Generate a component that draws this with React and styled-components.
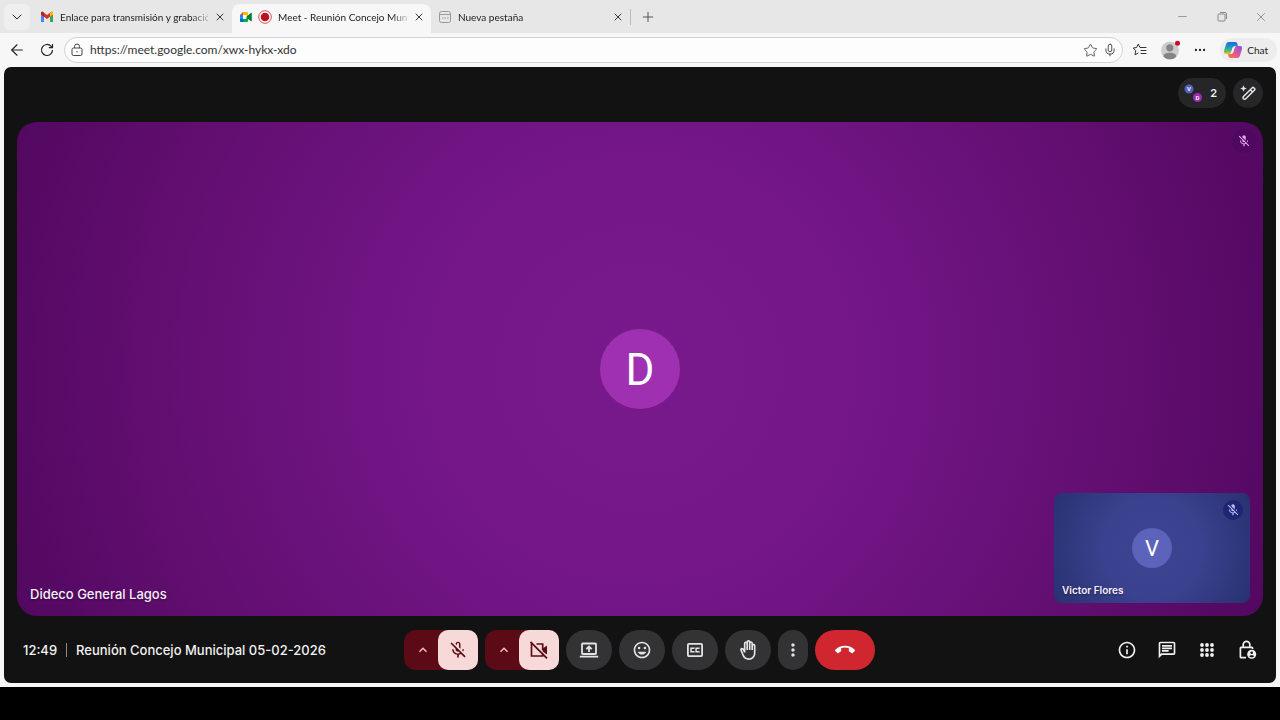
import React from "react";
import styled, { createGlobalStyle } from "styled-components";
import { ChevronDown, X, Plus, Minus, ArrowLeft, Star, Mic, Ellipsis } from "lucide-react";
import {
  MdOutlineMicOff,
  MdMicOff,
  MdOutlineMood,
  MdOutlineBackHand,
  MdMoreVert,
  MdCallEnd,
  MdKeyboardArrowUp,
  MdOutlineInfo,
  MdOutlineChat,
} from "react-icons/md";

const uiFont = `Lato, "Open Sans", sans-serif`;
const meetFont = `Inter, "Liberation Sans", sans-serif`;

const GlobalStyle = createGlobalStyle`
  *, *::before, *::after { box-sizing: border-box; }
  body { margin: 0; background: #000; }
  button, input { font: inherit; color: inherit; border: 0; padding: 0; background: none; }
  svg { display: block; flex: none; }
`;

const Page = styled.div`
  min-height: 100vh;
  display: flex;
  flex-direction: column;
  padding-bottom: 33px;
  background: #000;
`;

const Browser = styled.div`
  flex: 1;
  display: flex;
  flex-direction: column;
  background: #f7f7f7;
  font-family: ${uiFont};
  color: #222;
`;

const TabStrip = styled.header`
  display: flex;
  align-items: stretch;
  height: 33px;
  padding: 4px 0 0 4px;
  background: #e7e7e7;
`;

const TabMenuButton = styled.button`
  display: grid;
  place-items: center;
  width: 26px;
  height: 26px;
  border-radius: 6px;
  background: #efefef;
`;

const TabList = styled.nav`
  display: flex;
  margin-left: 3px;
`;

const Tab = styled.div`
  display: flex;
  align-items: center;
  gap: 6px;
  width: 199px;
  padding: 0 6px 3px 7px;
  border-radius: 8px 8px 0 0;
  background: ${(p) => (p.$active ? "#f7f7f7" : "transparent")};
`;

const TabTitle = styled.a`
  flex: 1;
  min-width: 0;
  white-space: nowrap;
  font-size: 10px;
  line-height: 16px;
  color: #222;
  text-decoration: none;
  mask-image: linear-gradient(to right, #000 88%, rgba(0, 0, 0, 0.2));
`;

const TabClose = styled.button`
  display: grid;
  place-items: center;
  width: 12px;
  height: 14px;
`;

const NewTab = styled.div`
  display: flex;
  align-items: center;
  gap: 9px;
  height: 26px;

  &::before {
    content: "";
    width: 1px;
    height: 16px;
    background: #bbb;
  }
`;

const PlainButton = styled.button`
  display: grid;
  place-items: center;
  width: ${(p) => p.$w || 20}px;
  height: ${(p) => p.$h || 20}px;
`;

const WindowControls = styled.div`
  display: flex;
  height: 25px;
  margin-left: auto;
  color: #888;
`;

const Toolbar = styled.div`
  display: flex;
  align-items: center;
  gap: 7px;
  height: 34px;
  padding: 0 3px 0 7px;
`;

const NavButtons = styled.div`
  display: flex;
  gap: 10px;
`;

const AddressBar = styled.label`
  flex: 1;
  display: flex;
  align-items: center;
  height: 26px;
  padding: 0 2px 0 5px;
  border: 1px solid #d2d2d2;
  border-radius: 13px;
  background: #fdfdfd;
`;

const AddressInput = styled.input`
  flex: 1;
  min-width: 0;
  margin-left: 6px;
  outline: 0;
  font-size: 12px;
  line-height: 16px;
  color: #333;
`;

const ToolbarActions = styled.div`
  display: flex;
  align-items: center;
  gap: 10px;
`;

const ChatButton = styled.button`
  display: flex;
  align-items: center;
  gap: 4px;
  height: 24px;
  padding: 0 9px 0 3px;
  border-radius: 12px;
  background: #ededed;
  font-size: 10px;
  color: #222;
`;

const Meeting = styled.main`
  flex: 1;
  display: flex;
  flex-direction: column;
  margin: 0 4px 4px;
  border-radius: 7px;
  background: #121212;
  font-family: ${meetFont};
  color: #f1f1f1;
`;

const MeetingTop = styled.div`
  display: flex;
  justify-content: flex-end;
  align-items: center;
  gap: 7px;
  height: 55px;
  padding: 0 13px 4px;
`;

const PeopleButton = styled.button`
  display: flex;
  align-items: center;
  justify-content: space-between;
  width: 48px;
  height: 30px;
  padding: 0 9px 0 6px;
  border-radius: 15px;
  background: #262628;
  font-size: 11px;
  font-weight: 600;
`;

const EffectsButton = styled.button`
  display: grid;
  place-items: center;
  width: 30px;
  height: 30px;
  border-radius: 50%;
  background: #262628;
`;

const Stage = styled.section`
  position: relative;
  flex: 1;
  display: grid;
  place-items: center;
  min-height: 280px;
  margin: 0 13px;
  border-radius: 20px;
  background: radial-gradient(circle farthest-corner, #791a8b 0%, #731687 35%, #5f0d6d 78%, #520860 100%);
`;

const Avatar = styled.div`
  display: grid;
  place-items: center;
  width: ${(p) => p.$size}px;
  height: ${(p) => p.$size}px;
  padding-top: 2px;
  border-radius: 50%;
  background: ${(p) => p.$color};
  font-family: Roboto, sans-serif;
  font-size: ${(p) => p.$font}px;
  line-height: 1;
  color: #fff;
`;

const ParticipantName = styled.span`
  position: absolute;
  left: ${(p) => (p.$small ? 8 : 13)}px;
  bottom: ${(p) => (p.$small ? 5 : 12)}px;
  font-size: ${(p) => (p.$small ? 10 : 13)}px;
  line-height: ${(p) => (p.$small ? 16 : 20)}px;
  font-weight: ${(p) => (p.$small ? 600 : 500)};
  color: #f8effa;
  text-shadow: 0 1px 2px rgba(0, 0, 0, 0.4);
`;

const MutedBadge = styled.span`
  position: absolute;
  top: 7px;
  right: 7px;
  display: grid;
  place-items: center;
  width: ${(p) => p.$size}px;
  height: ${(p) => p.$size}px;
  border-radius: 50%;
  background: ${(p) => p.$bg};
  color: ${(p) => p.$fg};
`;

const SelfTile = styled.div`
  position: absolute;
  right: 13px;
  bottom: 13px;
  display: grid;
  place-items: center;
  width: 196px;
  height: 110px;
  border-radius: 8px;
  background: radial-gradient(circle farthest-corner, #3d4594 0%, #3a418e 45%, #28316f 100%);
`;

const MeetingBar = styled.footer`
  display: grid;
  grid-template-columns: 1fr auto 1fr;
  align-items: center;
  height: 67px;
  padding: 0 9px 0 19px;
`;

const MeetingInfo = styled.div`
  display: flex;
  align-items: center;
  font-size: 13px;
  line-height: 20px;
  font-weight: 500;
  white-space: nowrap;
`;

const Divider = styled.span`
  width: 1px;
  height: 14px;
  margin: 0 9px;
  background: #8a8a8a;
`;

const Controls = styled.div`
  display: flex;
  gap: 7px;
  margin-right: 11px;
`;

const DeviceGroup = styled.div`
  display: flex;
  width: 74px;
  height: 40px;
  border-radius: 12px;
  background: #5c0a15;
  color: #f4c4c4;
`;

const DeviceMenu = styled.button`
  display: grid;
  place-items: center;
  width: 34px;
  height: 40px;
  padding-left: 4px;
`;

const DeviceToggle = styled.button`
  display: grid;
  place-items: center;
  width: 40px;
  height: 40px;
  border-radius: 10px;
  background: #f7d9da;
  color: #5b0d14;
`;

const ControlButton = styled.button`
  display: grid;
  place-items: center;
  width: ${(p) => p.$w || 46}px;
  height: 40px;
  border-radius: 20px;
  background: ${(p) => (p.$danger ? "#cf2630" : "#333336")};
  color: ${(p) => (p.$danger ? "#fff" : "#e3e3e3")};
`;

const SideControls = styled.div`
  display: flex;
  justify-content: flex-end;
`;

const GmailIcon = () => (
  <svg width="14" height="12" viewBox="0 0 14 12">
    <path d="M1 11V2.5l3 2.3V11z" fill="#4285f4" />
    <path d="M10 11V4.8l3-2.3V11z" fill="#34a853" />
    <path d="M1 3.5V2c0-1 1.200-1.500 2-.9l4 3 4-3c.8-.6 2-.1 2 .9v1.500L7 8z" fill="#d93025" />
    <path d="M10 5.700V2l1-.9c.8-.6 2-.1 2 .9v1.500z" fill="#fbbc04" />
    <path d="M1 3.500V2c0-1 1.200-1.500 2-.9l1 .8v3.800z" fill="#b3261e" />
  </svg>
);

const MeetIcon = () => (
  <svg width="13" height="12" viewBox="0 0 13 12">
    <path d="M1 4l3-3v3z" fill="#ea4335" />
    <path d="M1 4h3v4H1z" fill="#2684fc" />
    <path d="M1 8h3v3H2a1 1 0 0 1-1-1z" fill="#0066da" />
    <path d="M4 8h5v2a1 1 0 0 1-1 1H4z" fill="#00ac47" />
    <path d="M4 1h4a1 1 0 0 1 1 1v4L7 7V4H4z" fill="#ffba00" />
    <path d="M7 6l5-4.200c.4-.3.8 0 .8.400v7.600c0 .4-.4.700-.8.400L9 8H7z" fill="#00832d" />
    <path d="M4 4h3.500v4H4z" fill="#fff" />
  </svg>
);

const RecordingIcon = () => (
  <svg width="14" height="14" viewBox="0 0 14 14">
    <circle cx="7" cy="7" r="6.300" fill="#fff" stroke="#c4262e" strokeWidth="0.800" />
    <circle cx="7" cy="7" r="4.300" fill="#b8141f" />
  </svg>
);

const NewTabIcon = () => (
  <svg width="14" height="14" viewBox="0 0 14 14" fill="none" stroke="#999">
    <rect x="1.500" y="1.500" width="11" height="11" rx="2" />
    <path d="M1.500 4.500h11M4 8h1.500M6.500 8H8M9 8h1.500" />
  </svg>
);

const ReloadIcon = () => (
  <svg width="14" height="14" viewBox="0 0 14 14" fill="none" stroke="#222" strokeWidth="1.200">
    <path d="M12.500 7A5.500 5.500 0 1 1 11 3.200L12.500 4.700M12.500 1v3.700H8.800" />
  </svg>
);

const SiteLockIcon = () => (
  <svg width="14" height="14" viewBox="0 0 14 14" fill="none" stroke="#444">
    <rect x="2" y="5" width="10" height="7.500" rx="1.500" />
    <path d="M4.500 5V3.500a2.500 2.500 0 0 1 5 0V5" />
    <circle cx="7" cy="8.700" r="0.700" fill="#444" stroke="none" />
  </svg>
);

const FavoritesIcon = () => (
  <svg width="16" height="16" viewBox="0 0 16 16" fill="none" stroke="#333" strokeLinejoin="round" strokeLinecap="round">
    <path d="M9.500 5.500H8L6.300 2 4.600 5.500 1.200 6l2.500 2.500L3 12.800l3-1.700M9.500 5.500H14M9 8.500h5M9 11.500h5" />
  </svg>
);

const ProfileIcon = () => (
  <svg width="20" height="20" viewBox="0 0 20 20">
    <circle cx="10" cy="10.500" r="9" fill="#cdcdcd" />
    <circle cx="9.800" cy="7.800" r="3.600" fill="#858585" />
    <path d="M3.500 16.700c0-3 2.500-4 6.300-4s6.500 1 6.500 4a9 9 0 0 1-12.800 0z" fill="#858585" />
    <circle cx="17.500" cy="3.300" r="2.500" fill="#c50f1f" />
  </svg>
);

const RestoreIcon = () => (
  <svg width="10" height="10" viewBox="0 0 10 10" fill="none" stroke="#888">
    <rect x="1" y="2" width="7" height="7" rx="1" />
    <path d="M3 .5h5a1.500 1.500 0 0 1 1.500 1.500v5" />
  </svg>
);

const CopilotIcon = () => (
  <svg width="20" height="18" viewBox="0 0 20 18">
    <defs>
      <linearGradient id="cool" x1="0" y1="0" x2="0" y2="1">
        <stop offset="0" stopColor="#2866d8" />
        <stop offset="0.500" stopColor="#16a5c4" />
        <stop offset="0.800" stopColor="#79bd4f" />
        <stop offset="1" stopColor="#f3c02e" />
      </linearGradient>
      <linearGradient id="warm" x1="1" y1="0" x2="0" y2="1">
        <stop offset="0" stopColor="#8c50e8" />
        <stop offset="0.500" stopColor="#e0569b" />
        <stop offset="1" stopColor="#fb7b32" />
      </linearGradient>
    </defs>
    <path d="M6 1h6.500c1.200 0 1.700 1 2.100 2.300L15 5h-2.500c-1.600 0-2.400.8-2.900 2.300L8.300 11c-.5 1.500-1.200 2-2.800 2H3C1 13 .6 11.500 1.100 9.500L3 3.500C3.500 1.800 4.300 1 6 1z" fill="url(#cool)" />
    <path d="M14 17H7.500c-1.200 0-1.700-1-2.100-2.300L5 13h2.500c1.600 0 2.400-.8 2.900-2.300L11.700 7c.5-1.500 1.200-2 2.800-2H17c2 0 2.400 1.500 1.900 3.500L17 14.500c-.5 1.700-1.300 2.500-3 2.500z" fill="url(#warm)" />
    <path d="M9.600 6.500h1.800l-1.300 4.600c-.2.700-.5 1-1.100 1H8z" fill="#f4f4f8" />
  </svg>
);

const PeopleIcon = () => (
  <svg width="20" height="20" viewBox="0 0 20 20" fontFamily="Roboto, sans-serif" fontSize="6" fill="#fff" textAnchor="middle">
    <circle cx="5" cy="6" r="4.500" fill="#5360ba" />
    <text x="5" y="8">V</text>
    <circle cx="13.500" cy="14.500" r="4.500" fill="#9c2bb0" />
    <text x="13.500" y="17">D</text>
  </svg>
);

const EffectsIcon = () => (
  <svg width="18" height="18" viewBox="0 0 18 18" fill="none" stroke="#e3e3e3" strokeWidth="1.500" strokeLinejoin="round">
    <path d="M4.500 12.500l8.800-8.800a1 1 0 0 1 1.400 0l.9.900a1 1 0 0 1 0 1.400L6.800 14.800a1.600 1.600 0 0 1-2.300-2.300zM11.300 5.700l2.300 2.300" />
    <path d="M4.500 1.200l.9 2.400 2.400.9-2.400.9-.9 2.400-.9-2.400-2.400-.9 2.400-.9z" fill="#e3e3e3" stroke="none" />
  </svg>
);

const CameraOffIcon = () => (
  <svg width="20" height="20" viewBox="0 0 20 20" fill="none" stroke="currentColor" strokeWidth="1.700">
    <path d="M7.500 4H13.700V10.300M13.700 13.500V16H2.500V4H3.800" />
    <path d="M13.700 8.600L18 5.500v9l-4.300-3.100z" fill="currentColor" stroke="none" />
    <path d="M1.500 1.800l16.500 16.500" />
  </svg>
);

const PresentIcon = () => (
  <svg width="20" height="20" viewBox="0 0 20 20" fill="none" stroke="currentColor" strokeWidth="1.800">
    <rect x="3" y="3.500" width="14" height="10.500" rx="0.800" />
    <path d="M.8 16.700h18.400M10 12V6.800M7.300 9.200L10 6.500l2.700 2.700" />
  </svg>
);

const CaptionsIcon = () => (
  <svg width="20" height="20" viewBox="0 0 20 20" fill="none" stroke="currentColor" strokeWidth="1.800">
    <rect x="2.900" y="3.900" width="14.200" height="12.200" rx="1" />
    <path d="M8.900 8.800V8.200H6v3.600h2.900v-.6M14 8.800V8.200h-2.900v3.600H14v-.6" strokeWidth="1.500" />
  </svg>
);

const AppsIcon = () => (
  <svg width="20" height="20" viewBox="0 0 20 20" fill="currentColor">
    {[5, 10, 15].map((y) =>
      [5, 10, 15].map((x) => <circle key={`${x}-${y}`} cx={x} cy={y} r="1.900" />)
    )}
  </svg>
);

const HostLockIcon = () => (
  <svg width="20" height="20" viewBox="0 0 20 20" fill="none" stroke="currentColor" strokeWidth="1.700">
    <path d="M9 17.700H4.200a.8.800 0 0 1-.8-.8V8.100c0-.4.400-.8.800-.8h10.600c.4 0 .8.400.8.800V9M6.200 7.300V4.600a3.300 3.300 0 0 1 6.600 0v2.700" />
    <circle cx="14.700" cy="14.200" r="4.500" fill="currentColor" stroke="none" />
    <circle cx="14.700" cy="12.800" r="1.300" fill="#121212" stroke="none" />
    <path d="M12.300 16.200c.6-1.200 4.200-1.200 4.800 0-.9 1.400-3.900 1.400-4.800 0z" fill="#121212" stroke="none" />
  </svg>
);

function BrowserTab({ icon, title, active }) {
  return (
    <Tab $active={active}>
      {icon}
      <TabTitle href="#">{title}</TabTitle>
      <TabClose aria-label="Cerrar pestaña">
        <X size={12} strokeWidth={1.800} />
      </TabClose>
    </Tab>
  );
}

function DeviceControl({ label, icon }) {
  return (
    <DeviceGroup>
      <DeviceMenu aria-label={`Opciones de ${label}`}>
        <MdKeyboardArrowUp size={16} />
      </DeviceMenu>
      <DeviceToggle aria-label={`Activar ${label}`}>{icon}</DeviceToggle>
    </DeviceGroup>
  );
}

export default function App() {
  return (
    <Page>
      <GlobalStyle />
      <Browser>
        <TabStrip>
          <TabMenuButton aria-label="Menú de pestañas">
            <ChevronDown size={16} strokeWidth={1.500} />
          </TabMenuButton>
          <TabList>
            <BrowserTab icon={<GmailIcon />} title="Enlace para transmisión y grabació" />
            <BrowserTab
              active
              icon={
                <>
                  <MeetIcon />
                  <RecordingIcon />
                </>
              }
              title="Meet - Reunión Concejo Mun"
            />
            <BrowserTab icon={<NewTabIcon />} title="Nueva pestaña" />
          </TabList>
          <NewTab>
            <PlainButton $w={16} aria-label="Nueva pestaña">
              <Plus size={16} strokeWidth={1.500} color="#555" />
            </PlainButton>
          </NewTab>
          <WindowControls>
            <PlainButton $w={39} $h={25} aria-label="Minimizar">
              <Minus size={13} strokeWidth={1.500} />
            </PlainButton>
            <PlainButton $w={39} $h={25} aria-label="Restaurar">
              <RestoreIcon />
            </PlainButton>
            <PlainButton $w={39} $h={25} aria-label="Cerrar">
              <X size={14} strokeWidth={1.500} />
            </PlainButton>
          </WindowControls>
        </TabStrip>

        <Toolbar>
          <NavButtons>
            <PlainButton aria-label="Atrás">
              <ArrowLeft size={18} strokeWidth={1.500} />
            </PlainButton>
            <PlainButton aria-label="Actualizar">
              <ReloadIcon />
            </PlainButton>
          </NavButtons>
          <AddressBar>
            <SiteLockIcon />
            <AddressInput aria-label="Dirección" defaultValue="https://meet.google.com/xwx-hykx-xdo" />
            <PlainButton aria-label="Agregar a favoritos">
              <Star size={15} strokeWidth={1.500} color="#555" />
            </PlainButton>
            <PlainButton aria-label="Búsqueda por voz">
              <Mic size={14} strokeWidth={1.600} color="#444" />
            </PlainButton>
          </AddressBar>
          <ToolbarActions>
            <PlainButton aria-label="Favoritos">
              <FavoritesIcon />
            </PlainButton>
            <PlainButton aria-label="Perfil">
              <ProfileIcon />
            </PlainButton>
            <PlainButton aria-label="Más">
              <Ellipsis size={14} />
            </PlainButton>
            <ChatButton>
              <CopilotIcon />
              Chat
            </ChatButton>
          </ToolbarActions>
        </Toolbar>

        <Meeting>
          <MeetingTop>
            <PeopleButton aria-label="Personas">
              <PeopleIcon />2
            </PeopleButton>
            <EffectsButton aria-label="Efectos">
              <EffectsIcon />
            </EffectsButton>
          </MeetingTop>

          <Stage>
            <Avatar $size={80} $font={44} $color="#9f30b2">D</Avatar>
            <MutedBadge $size={24} $bg="#4f0860" $fg="#e6a8ee">
              <MdMicOff size={14} />
            </MutedBadge>
            <ParticipantName>Dideco General Lagos</ParticipantName>
            <SelfTile>
              <Avatar $size={40} $font={22} $color="#5c63bb">V</Avatar>
              <MutedBadge $size={20} $bg="#1f2473" $fg="#bcc0f4">
                <MdMicOff size={14} />
              </MutedBadge>
              <ParticipantName $small>Victor Flores</ParticipantName>
            </SelfTile>
          </Stage>

          <MeetingBar>
            <MeetingInfo>
              <span>12:49</span>
              <Divider />
              <span>Reunión Concejo Municipal 05-02-2026</span>
            </MeetingInfo>
            <Controls>
              <DeviceControl label="micrófono" icon={<MdOutlineMicOff size={20} />} />
              <DeviceControl label="cámara" icon={<CameraOffIcon />} />
              <ControlButton aria-label="Presentar">
                <PresentIcon />
              </ControlButton>
              <ControlButton aria-label="Reacciones">
                <MdOutlineMood size={20} />
              </ControlButton>
              <ControlButton aria-label="Subtítulos">
                <CaptionsIcon />
              </ControlButton>
              <ControlButton aria-label="Levantar la mano">
                <MdOutlineBackHand size={20} />
              </ControlButton>
              <ControlButton $w={30} aria-label="Más opciones">
                <MdMoreVert size={20} />
              </ControlButton>
              <ControlButton $w={60} $danger aria-label="Salir de la llamada">
                <MdCallEnd size={20} />
              </ControlButton>
            </Controls>
            <SideControls>
              <PlainButton $w={40} $h={40} aria-label="Detalles">
                <MdOutlineInfo size={20} />
              </PlainButton>
              <PlainButton $w={40} $h={40} aria-label="Chat de la reunión">
                <MdOutlineChat size={20} />
              </PlainButton>
              <PlainButton $w={40} $h={40} aria-label="Actividades">
                <AppsIcon />
              </PlainButton>
              <PlainButton $w={40} $h={40} aria-label="Controles del organizador">
                <HostLockIcon />
              </PlainButton>
            </SideControls>
          </MeetingBar>
        </Meeting>
      </Browser>
    </Page>
  );
}
